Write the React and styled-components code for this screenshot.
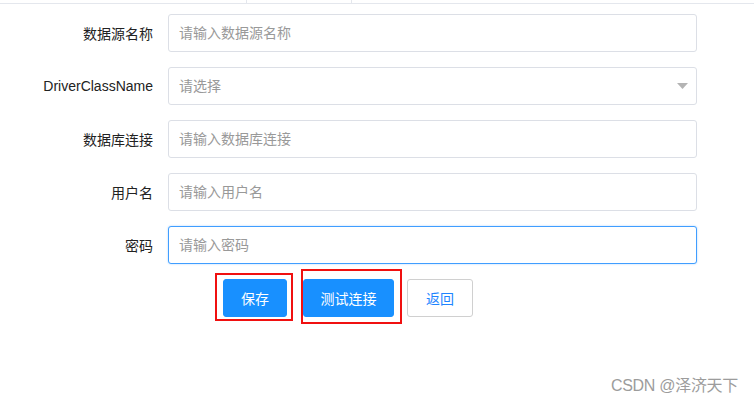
import React from "react";
import styled, { createGlobalStyle } from "styled-components";

const Global = createGlobalStyle`
  html, body { margin: 0; padding: 0; background: #fff; }
  body { font-family: "Liberation Sans", "Noto Sans CJK SC", sans-serif; }
  * { box-sizing: border-box; }
`;

const Page = styled.div`
  position: relative;
  width: 754px;
  height: 405px;
  overflow: hidden;
  background: #fff;
`;

const TabStrip = styled.div`
  display: flex;
  height: 4px;
  border-bottom: 1px solid #e4e7ed;
`;

const TabCell = styled.div`
  width: ${(p) => p.$w}px;
  height: 3px;
  border-right: 1px solid #e4e7ed;
`;

const Form = styled.form`
  display: flex;
  flex-direction: column;
  padding-top: 10px;
`;

const Fields = styled.div`
  display: flex;
  flex-direction: column;
  gap: 15px;
`;

const Row = styled.div`
  display: flex;
  align-items: center;
  height: 38px;
`;

const Label = styled.label`
  width: 168px;
  padding-right: 15px;
  text-align: right;
  font-size: 14px;
  color: #222;
  white-space: nowrap;
`;

const Field = styled.div`
  position: relative;
  width: 529px;
  height: 38px;
`;

const Input = styled.input`
  width: 100%;
  height: 100%;
  border: 1px solid ${(p) => (p.$focused ? "#409eff" : "#dcdfe6")};
  box-shadow: ${(p) => (p.$focused ? "0 0 2px rgba(64,158,255,0.45)" : "none")};
  border-radius: 3px;
  padding: 0 30px 0 10px;
  font-size: 14px;
  font-family: inherit;
  color: #606266;
  outline: none;
  background: #fff;
  &::placeholder { color: #999; }
`;

const Arrow = styled.svg`
  position: absolute;
  right: 9px;
  top: 16px;
  pointer-events: none;
`;

const ButtonRow = styled.div`
  display: flex;
  align-items: flex-start;
  margin-top: 5px;
  padding-left: 215px;
`;

const Mark = styled.div`
  display: flex;
  border: 2px solid #f01010;
  padding: ${(p) => p.$pad};
  margin-top: ${(p) => p.$mt || 0}px;
  margin-right: ${(p) => p.$mr || 0}px;
`;

const Button = styled.button`
  height: 38px;
  width: ${(p) => p.$w}px;
  margin-top: ${(p) => p.$mt || 0}px;
  border-radius: 3px;
  font-size: 14px;
  font-family: inherit;
  cursor: pointer;
  padding: 0;
  border: 1px solid ${(p) => (p.$primary ? "#1890ff" : "#d0d0d0")};
  background: ${(p) => (p.$primary ? "#1890ff" : "#fff")};
  color: ${(p) => (p.$primary ? "#fff" : "#1f85ff")};
`;

const Watermark = styled.div`
  position: absolute;
  right: 16px;
  bottom: 9px;
  font-size: 16px;
  color: #9c9c9c;
  letter-spacing: -0.3px;
`;

const fields = [
  { label: "数据源名称", placeholder: "请输入数据源名称" },
  { label: "DriverClassName", placeholder: "请选择", select: true },
  { label: "数据库连接", placeholder: "请输入数据库连接" },
  { label: "用户名", placeholder: "请输入用户名" },
  { label: "密码", placeholder: "请输入密码", focused: true },
];

export default function App() {
  return (
    <Page>
      <Global />
      <TabStrip>
        <TabCell $w={247} />
        <TabCell $w={105} />
      </TabStrip>
      <Form onSubmit={(e) => e.preventDefault()}>
        <Fields>
          {fields.map((f) => (
            <Row key={f.label}>
              <Label>{f.label}</Label>
              <Field>
                <Input
                  placeholder={f.placeholder}
                  readOnly={f.select}
                  $focused={f.focused}
                />
                {f.select && (
                  <Arrow width="11" height="6" viewBox="0 0 11 6">
                    <path d="M0 0 L11 0 L5.5 6 Z" fill="#b4b4b4" />
                  </Arrow>
                )}
              </Field>
            </Row>
          ))}
        </Fields>
        <ButtonRow>
          <Mark $pad="4px 4px 2px 6px" $mt={4} $mr={8}>
            <Button type="button" $primary $w={64}>保存</Button>
          </Mark>
          <Mark $pad="8px 6px 5px 0" $mr={5}>
            <Button type="button" $primary $w={91}>测试连接</Button>
          </Mark>
          <Button type="button" $w={66} $mt={10}>返回</Button>
        </ButtonRow>
      </Form>
      <Watermark>CSDN @泽济天下</Watermark>
    </Page>
  );
}
